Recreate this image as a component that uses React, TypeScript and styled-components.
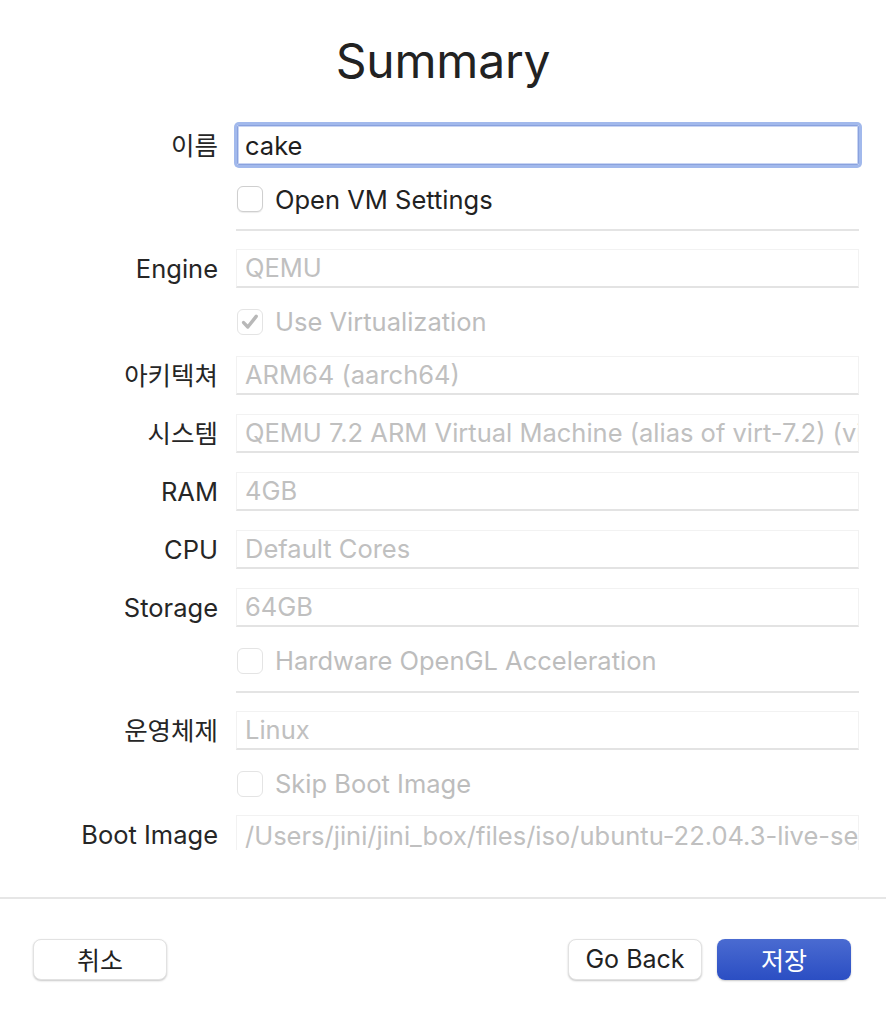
import React from 'react'
import styled, { createGlobalStyle } from 'styled-components'

const GlobalStyle = createGlobalStyle`
  html, body {
    margin: 0;
    padding: 0;
    background: #ffffff;
  }
  body {
    font-family: Inter, "Noto Sans", "Noto Sans CJK KR", sans-serif;
    color: #262626;
    -webkit-font-smoothing: antialiased;
  }
`

const Window = styled.div`
  width: 886px;
  height: 1012px;
  display: flex;
  flex-direction: column;
  background: #fff;
  overflow: hidden;
`

const Scroll = styled.div`
  height: 850px;
  flex-shrink: 0;
  overflow: hidden;
  display: flex;
  flex-direction: column;
  padding-right: 27px;
`

const Title = styled.h1`
  margin: 0;
  height: 115px;
  flex-shrink: 0;
  display: flex;
  align-items: center;
  justify-content: center;
  padding-left: 27px;
  padding-top: 6px;
  box-sizing: border-box;
  font-size: 48px;
  font-weight: 400;
  letter-spacing: -0.2px;
  color: #222;
`

const Row = styled.div<{ h: number; top?: boolean }>`
  display: grid;
  grid-template-columns: 218px 1fr;
  column-gap: 17px;
  align-items: ${(p) => (p.top ? 'start' : 'center')};
  padding-top: ${(p) => (p.top ? 7 : 0)}px;
  box-sizing: border-box;
  height: ${(p) => p.h}px;
  flex-shrink: 0;
`

const Label = styled.div`
  text-align: right;
  font-size: 25.5px;
  line-height: 39px;
  color: #262626;
  white-space: nowrap;
  font-family: Inter, "Noto Sans CJK KR", sans-serif;
`

const NameField = styled.div`
  height: 40px;
  box-sizing: border-box;
  border: 1px solid #8aa2de;
  box-shadow: 0 0 0 3px #a2b9ec, inset 0 0 0 1px #c9d5f3;
  border-radius: 2px;
  margin-left: 2px;
  display: flex;
  align-items: center;
  padding-left: 7px;
  font-size: 25.5px;
  color: #1e1e1e;
`

const Field = styled.div<{ open?: boolean }>`
  height: 39px;
  box-sizing: border-box;
  border: 1px solid #f2f2f2;
  border-bottom: ${(p) => (p.open ? 'none' : '2px solid #e3e3e3')};
  display: flex;
  align-items: center;
  padding-left: 8px;
  font-size: 25.5px;
  color: #c0c0c0;
  white-space: nowrap;
  overflow: hidden;
  margin-left: 1px;
`

const CheckLine = styled.label<{ disabled?: boolean }>`
  grid-column: 2;
  display: flex;
  align-items: center;
  gap: 12px;
  font-size: 25.5px;
  color: ${(p) => (p.disabled ? '#bdbdbd' : '#222')};
  margin-left: 2px;
`

const Box = styled.span<{ disabled?: boolean }>`
  width: 26px;
  height: 26px;
  box-sizing: border-box;
  border-radius: 6px;
  border: 1px solid ${(p) => (p.disabled ? '#e4e4e4' : '#cfcfcf')};
  background: #fff;
  box-shadow: ${(p) => (p.disabled ? 'none' : '0 1px 1px rgba(0,0,0,0.08)')};
  display: flex;
  align-items: center;
  justify-content: center;
`

const Rule = styled.div<{ top: number; bottom: number }>`
  margin: ${(p) => p.top}px 0 ${(p) => p.bottom}px 236px;
  height: 2px;
  background: #e4e4e4;
  flex-shrink: 0;
`

const Divider = styled.div`
  margin-top: 47px;
  height: 2px;
  background: #e6e6e6;
`

const Footer = styled.div`
  display: flex;
  align-items: center;
  padding: 40px 35px 0 33px;
  gap: 15px;
`

const Spacer = styled.div`
  flex: 1;
`

const Button = styled.button<{ primary?: boolean }>`
  width: 134px;
  height: 41px;
  border-radius: 8px;
  font-family: Inter, "Noto Sans CJK KR", sans-serif;
  font-size: 25px;
  cursor: pointer;
  border: ${(p) => (p.primary ? 'none' : '1px solid #e2e2e2')};
  color: ${(p) => (p.primary ? '#fff' : '#222')};
  background: ${(p) =>
    p.primary ? 'linear-gradient(#4a6bd1, #2b4ec3)' : '#ffffff'};
  box-shadow: 0 1px 2px rgba(0, 0, 0, 0.22);
  display: flex;
  align-items: center;
  justify-content: center;
  padding: 0 0 2px;
`

function Checkbox({ label, checked, disabled }: { label: string; checked?: boolean; disabled?: boolean }) {
  return (
    <CheckLine disabled={disabled}>
      <Box disabled={disabled}>
        {checked && (
          <svg width="20" height="20" viewBox="0 0 20 20">
            <path
              d="M3.6 10.6 L7.8 15 L16.2 4.4"
              fill="none"
              stroke="#b8b8b8"
              strokeWidth="3.4"
              strokeLinecap="round"
              strokeLinejoin="round"
            />
          </svg>
        )}
      </Box>
      {label}
    </CheckLine>
  )
}

const fields1 = [
  { label: '아키텍쳐', value: 'ARM64 (aarch64)' },
  { label: '시스템', value: 'QEMU 7.2 ARM Virtual Machine (alias of virt-7.2) (virt)' },
  { label: 'RAM', value: '4GB' },
  { label: 'CPU', value: 'Default Cores' },
  { label: 'Storage', value: '64GB' },
]

export default function App() {
  return (
    <Window>
      <GlobalStyle />
      <Scroll>
        <Title>Summary</Title>
        <Row h={60}>
          <Label>이름</Label>
          <NameField>cake</NameField>
        </Row>
        <Row h={48}>
          <Checkbox label="Open VM Settings" />
        </Row>
        <Rule top={6} bottom={8} />
        <Row h={58}>
          <Label>Engine</Label>
          <Field>QEMU</Field>
        </Row>
        <Row h={49}>
          <Checkbox label="Use Virtualization" checked disabled />
        </Row>
        {fields1.map((f) => (
          <Row h={58} key={f.label}>
            <Label>{f.label}</Label>
            <Field>{f.value}</Field>
          </Row>
        ))}
        <Row h={49}>
          <Checkbox label="Hardware OpenGL Acceleration" disabled />
        </Row>
        <Rule top={6} bottom={8} />
        <Row h={58}>
          <Label>운영체제</Label>
          <Field>Linux</Field>
        </Row>
        <Row h={49}>
          <Checkbox label="Skip Boot Image" disabled />
        </Row>
        <Row h={58} top>
          <Label>Boot Image</Label>
          <Field open>/Users/jini/jini_box/files/iso/ubuntu-22.04.3-live-server-arm64.iso</Field>
        </Row>
      </Scroll>
      <Divider />
      <Footer>
        <Button>취소</Button>
        <Spacer />
        <Button>Go Back</Button>
        <Button primary>저장</Button>
      </Footer>
    </Window>
  )
}
